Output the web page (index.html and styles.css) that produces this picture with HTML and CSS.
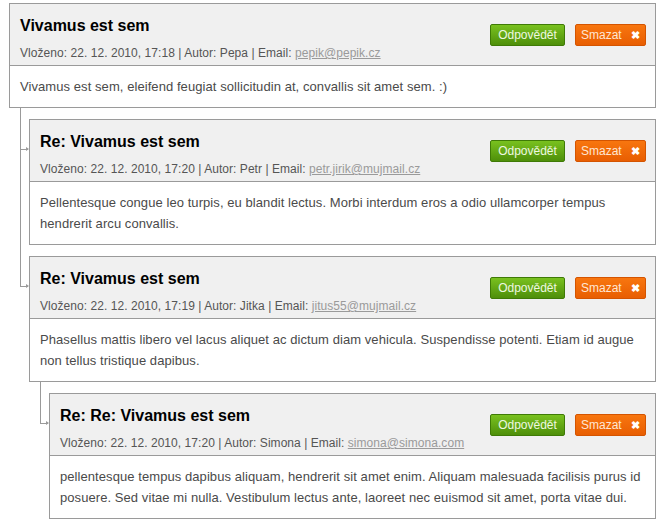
FILE: index.html
```html
<!DOCTYPE html>
<html lang="cs">
<head>
    <meta charset="UTF-8">
    <title>Komentáře</title>
    <link rel="stylesheet" href="styles.css">
</head>
<body>

    <div class="komentare">

        <div class="komentar">
            <div class="box">
                <div class="hlavicka">
                    <div class="info">
                        <h2>Vivamus est sem</h2>
                        <div class="meta">Vloženo: 22. 12. 2010, 17:18 | Autor: Pepa | Email: <a href="#">pepik@pepik.cz</a></div>
                    </div>
                    <div class="akce">
                        <a href="#" class="btn btn-odpovedet">Odpovědět</a>
                        <a href="#" class="btn btn-smazat">Smazat <b>&#10006;</b></a>
                    </div>
                </div>
                <div class="text">Vivamus est sem, eleifend feugiat sollicitudin at, convallis sit amet sem. :)</div>
            </div>

            <div class="odpovedi">
                <div class="komentar odpoved">
                    <div class="box">
                        <div class="hlavicka">
                            <div class="info">
                                <h2>Re: Vivamus est sem</h2>
                                <div class="meta">Vloženo: 22. 12. 2010, 17:20 | Autor: Petr | Email: <a href="#">petr.jirik@mujmail.cz</a></div>
                            </div>
                            <div class="akce">
                                <a href="#" class="btn btn-odpovedet">Odpovědět</a>
                                <a href="#" class="btn btn-smazat">Smazat <b>&#10006;</b></a>
                            </div>
                        </div>
                        <div class="text">Pellentesque congue leo turpis, eu blandit lectus. Morbi interdum eros a odio ullamcorper tempus hendrerit arcu convallis.</div>
                    </div>
                </div>

                <div class="komentar odpoved posledni">
                    <div class="box">
                        <div class="hlavicka">
                            <div class="info">
                                <h2>Re: Vivamus est sem</h2>
                                <div class="meta">Vloženo: 22. 12. 2010, 17:19 | Autor: Jitka | Email: <a href="#">jitus55@mujmail.cz</a></div>
                            </div>
                            <div class="akce">
                                <a href="#" class="btn btn-odpovedet">Odpovědět</a>
                                <a href="#" class="btn btn-smazat">Smazat <b>&#10006;</b></a>
                            </div>
                        </div>
                        <div class="text">Phasellus mattis libero vel lacus aliquet ac dictum diam vehicula. Suspendisse potenti. Etiam id augue non tellus tristique dapibus.</div>
                    </div>

                    <div class="odpovedi">
                        <div class="komentar odpoved posledni">
                            <div class="box">
                                <div class="hlavicka">
                                    <div class="info">
                                        <h2>Re: Re: Vivamus est sem</h2>
                                        <div class="meta">Vloženo: 22. 12. 2010, 17:20 | Autor: Simona | Email: <a href="#">simona@simona.com</a></div>
                                    </div>
                                    <div class="akce">
                                        <a href="#" class="btn btn-odpovedet">Odpovědět</a>
                                        <a href="#" class="btn btn-smazat">Smazat <b>&#10006;</b></a>
                                    </div>
                                </div>
                                <div class="text">pellentesque tempus dapibus aliquam, hendrerit sit amet enim. Aliquam malesuada facilisis purus id posuere. Sed vitae mi nulla. Vestibulum lectus ante, laoreet nec euismod sit amet, porta vitae dui.</div>
                            </div>
                        </div>
                    </div>
                </div>
            </div>
        </div>

    </div>

</body>
</html>
```

FILE: styles.css
```css
body {
    margin: 0;
    font-family: "Liberation Sans", Arial, sans-serif;
    background-color: #fff;
}

.komentare {
    padding: 3px 5px 0 9px;
}

.box {
    border: 1px solid #9a9a9a;
    background-color: #fff;
}

.hlavicka {
    background-color: #f0f0f0;
    border-bottom: 1px solid #9a9a9a;
    padding: 11px 9px 3px 10px;
    display: flex;
    justify-content: space-between;
    align-items: center;
}

.hlavicka h2 {
    margin: 0 0 7px 0;
    font-size: 16px;
    line-height: 22px;
    color: #000;
}

.meta {
    font-size: 12px;
    line-height: 18px;
    color: #555;
    letter-spacing: 0.05px;
}

.meta a {
    color: #9a9a9a;
}

.akce {
    display: flex;
    gap: 10px;
    margin-top: -7px;
}

.btn {
    display: block;
    height: 20px;
    line-height: 20px;
    font-size: 12px;
    text-decoration: none;
    border-radius: 2px;
    text-align: center;
}

.btn-odpovedet {
    width: 73px;
    color: #eef8e0;
    background: linear-gradient(#79c11f, #4e8f0a);
    border: 1px solid #3f7a06;
}

.btn-smazat {
    width: 69px;
    color: #ffe6d2;
    background: linear-gradient(#f8760f, #e85e02);
    border: 1px solid #d45400;
}

.btn-smazat b {
    margin-left: 6px;
    font-size: 11px;
    color: #fff;
}

.text {
    padding: 10px 10px;
    font-size: 13px;
    line-height: 21px;
    color: #4a4a4a;
    letter-spacing: 0.07px;
}

/* odpovedi - strom */
.odpovedi {
    margin-left: 20px;
}

.odpoved {
    position: relative;
    padding-top: 11px;
}

.odpoved::before {
    content: "";
    position: absolute;
    left: -9px;
    top: 0;
    width: 1px;
    height: 100%;
    background-color: #9a9a9a;
}

.odpoved.posledni::before {
    height: 41px;
}

.odpoved::after {
    content: "";
    position: absolute;
    left: -9px;
    top: 41px;
    width: 8px;
    height: 1px;
    background-color: #9a9a9a;
}

.odpoved > .box {
    position: relative;
}

/* sipka */
.odpoved > .box::before {
    content: "";
    position: absolute;
    left: -4px;
    top: 27px;
    border-left: 3px solid #9a9a9a;
    border-top: 2px solid transparent;
    border-bottom: 2px solid transparent;
}
```
